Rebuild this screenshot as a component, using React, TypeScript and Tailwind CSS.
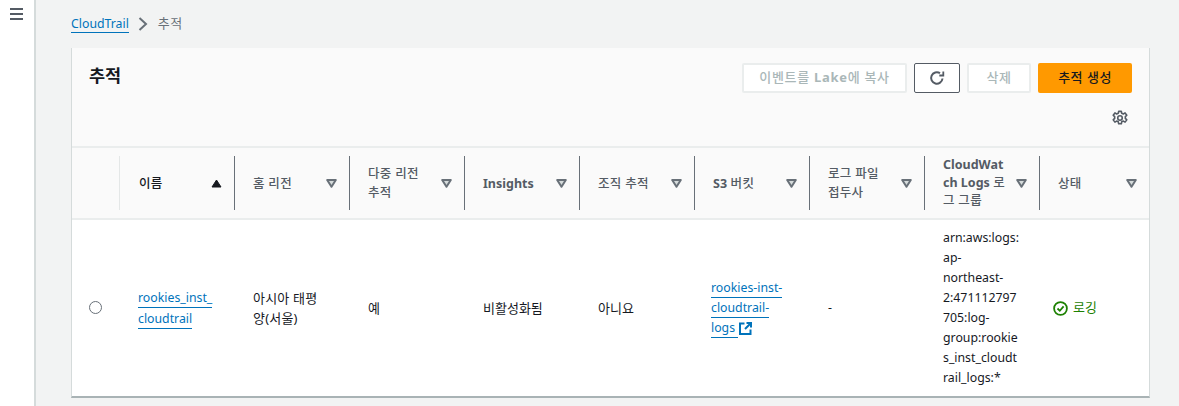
import React from "react";

const font = { fontFamily: '"Noto Sans","Noto Sans CJK KR",sans-serif' };

function Caret({ dark }: { dark?: boolean }) {
  return dark ? (
    <svg width="11" height="9" viewBox="0 0 11 9" className="shrink-0"><path d="M5.5 1 L10 8 L1 8 Z" fill="#16191f" stroke="#16191f" /></svg>
  ) : (
    <svg width="11" height="9" viewBox="0 0 11 9" className="shrink-0"><path d="M1.2 1 L9.8 1 L5.5 7.8 Z" fill="#d5dbdb" stroke="#687078" strokeWidth="2" strokeLinejoin="round" /></svg>
  );
}

function Head({ label, first, dark, tight }: { label: React.ReactNode; first?: boolean; dark?: boolean; tight?: boolean }) {
  return (
    <div className={`relative flex h-full items-center pr-[12px] ${first ? "pl-[20px]" : "pl-[19px]"}`}>
      <div className={`absolute left-0 top-[8px] bottom-[8px] w-px ${first ? "bg-[#e4e7e7]" : "bg-[#687078]"}`} />
      <div className={`flex-1 text-[12.5px] font-medium tracking-[0.3px] ${tight ? "leading-[18px]" : "leading-[19px]"} ${dark ? "text-[#16191f]" : "text-[#545b64]"}`}>{label}</div>
      <Caret dark={dark} />
    </div>
  );
}

function Cell({ children, first }: { children: React.ReactNode; first?: boolean }) {
  return <div className={`flex items-center pr-[4px] text-[12.3px] leading-[20px] text-[#16191f] ${first ? "pl-[20px]" : "pl-[19px]"}`}>{children}</div>;
}

function A({ children }: { children: React.ReactNode }) {
  return <span className="text-[#0073bb] border-b border-[#0073bb] pb-px">{children}</span>;
}

const B = ({ children }: { children: React.ReactNode }) => <span className="font-bold tracking-normal">{children}</span>;

const heads: { k: string; l: React.ReactNode; first?: boolean; dark?: boolean; tight?: boolean }[] = [
  { k: "name", l: "이름", first: true, dark: true },
  { k: "home", l: "홈 리전" },
  { k: "multi", l: <>다중 리전<br />추적</> },
  { k: "ins", l: <B>Insights</B> },
  { k: "org", l: "조직 추적" },
  { k: "s3", l: <><B>S3</B> 버킷</> },
  { k: "prefix", l: <>로그 파일<br />접두사</> },
  { k: "cw", l: <><B>CloudWat</B><br /><B>ch Logs</B> 로<br />그 그룹</>, tight: true },
  { k: "state", l: "상태" },
];

export default function App() {
  return (
    <div className="flex h-[406px] w-[1179px] overflow-hidden bg-[#f2f3f3]" style={font}>
      <aside className="w-[36px] shrink-0 bg-white border-r-2 border-[#d5dbdb] pl-[10px] pt-[7px]">
        <svg width="13" height="14" viewBox="0 0 13 14"><path d="M0 2h13M0 7h13M0 12h13" stroke="#545b64" strokeWidth="1.8" /></svg>
      </aside>
      <main className="flex-1 pl-[35px] pr-[29px]">
        <nav className="flex h-[48px] items-center text-[12.3px]">
          <span className="text-[#0073bb] border-b border-[#0073bb] leading-[17px]">CloudTrail</span>
          <svg width="10" height="14" viewBox="0 0 10 14" className="ml-[9px] mr-[10px]"><path d="M1.5 1 L8 7 L1.5 13" fill="none" stroke="#687078" strokeWidth="2" /></svg>
          <span className="text-[#687078] text-[13px] tracking-[0.4px]">추적</span>
        </nav>
        <section className="h-[350px] border-l border-[#d5dbdb] border-b-2 border-b-[#a9b3b5] border-r border-r-[#d5dbdb] bg-white">
          <div className="h-[100px] bg-[#fafafa] border-b-2 border-[#eaeded] pl-[17px] pr-[17px] relative">
            <div className="flex items-start justify-between pt-[15px]">
              <h1 className="text-[17.5px] font-bold leading-[24px] text-[#16191f]">추적</h1>
              <div className="flex gap-[7px] text-[13px] font-medium">
                <button className="h-[30px] w-[165px] rounded-[2px] border-2 border-[#eaeded] bg-white text-[#aab7b8] tracking-[0.7px]">이벤트를 <span className="font-bold">Lake</span>에 복사</button>
                <button className="flex h-[30px] w-[46px] items-center justify-center rounded-[2px] border border-[#545b64] bg-white">
                  <svg width="16" height="16" viewBox="0 0 16 16" fill="none" stroke="#545b64" strokeWidth="2"><path d="M13.5 8.5 A5.7 5.7 0 1 1 11 3.2" /><path d="M14.3 1.5 V5.5 H10.3" strokeWidth="1.8" /></svg>
                </button>
                <button className="h-[30px] w-[64px] rounded-[2px] border-2 border-[#eaeded] bg-white text-[#aab7b8] tracking-[0.5px]">삭제</button>
                <button className="h-[30px] w-[94px] rounded-[2px] bg-[#ff9900] text-[#16191f] tracking-[0.5px]">추적 생성</button>
              </div>
            </div>
            <svg className="absolute right-[21px] top-[62px]" width="16" height="16" viewBox="0 0 24 24" fill="none" stroke="#545b64" strokeWidth="2.4" strokeLinejoin="round">
              <path d="M10 2h4l.6 3 2.4 1 2.6-1.6 2.6 3.4-2.2 2.2v2.6l2.2 2.2-2.6 3.4-2.6-1.6-2.4 1-.6 3h-4l-.6-3-2.4-1-2.6 1.6-2.6-3.4 2.2-2.2v-2.6L1.8 7.8l2.6-3.4L7 6l2.4-1z" />
              <circle cx="12" cy="12" r="3.4" />
            </svg>
          </div>
          <div className="grid grid-cols-[47px_repeat(8,115px)_1fr]">
            <div className="contents">
              <div className="h-[72px] bg-[#fafafa] border-b-2 border-[#eaeded]" />
              {heads.map((h) => (
                <div key={h.k} className="h-[72px] bg-[#fafafa] border-b-2 border-[#eaeded]">
                  <Head label={h.l} first={h.first} dark={h.dark} tight={h.tight} />
                </div>
              ))}
            </div>
            <div className="contents">
              <div className="flex h-[176px] items-center pl-[17px]">
                <span className="mb-[1px] block h-[13px] w-[13px] rounded-full border border-[#687078] bg-white" />
              </div>
              <Cell first><span className="-ml-px leading-[21px]"><A>rookies_inst_</A><br /><A>cloudtrail</A></span></Cell>
              <Cell><span className="text-[13px] tracking-[0.2px]">아시아 태평<br />양(서울)</span></Cell>
              <Cell><span className="text-[13px]">예</span></Cell>
              <Cell><span className="text-[13px]">비활성화됨</span></Cell>
              <Cell><span className="text-[13px]">아니요</span></Cell>
              <Cell>
                <span className="-ml-[2px] leading-[20px]">
                  <A>rookies-inst-</A><br /><A>cloudtrail-</A><br /><A>logs&nbsp;</A>
                  <svg className="ml-[1px] inline-block align-[-3px]" width="13" height="13" viewBox="0 0 13 13" fill="none" stroke="#0073bb" strokeWidth="2"><path d="M5.5 1.5H1v10.5h10.5V7.5" /><path d="M7.5 1h4.5v4.5M12 1L6 7" /></svg>
                </span>
              </Cell>
              <Cell>-</Cell>
              <Cell><span>arn:aws:logs:<br />ap-<br />northeast-<br />2:471112797<br />705:log-<br />group:rookie<br />s_inst_cloudt<br />rail_logs:*</span></Cell>
              <div className="flex items-center gap-[5px] pl-[14px] text-[13px] text-[#1d8102]">
                <svg width="15" height="15" viewBox="0 0 15 15" fill="none" stroke="#1d8102" strokeWidth="1.8"><circle cx="7.5" cy="7.5" r="6.4" /><path d="M4.5 7.5 L6.8 9.8 L10.6 5.4" /></svg>
                <span>로깅</span>
              </div>
            </div>
          </div>
        </section>
      </main>
    </div>
  );
}
